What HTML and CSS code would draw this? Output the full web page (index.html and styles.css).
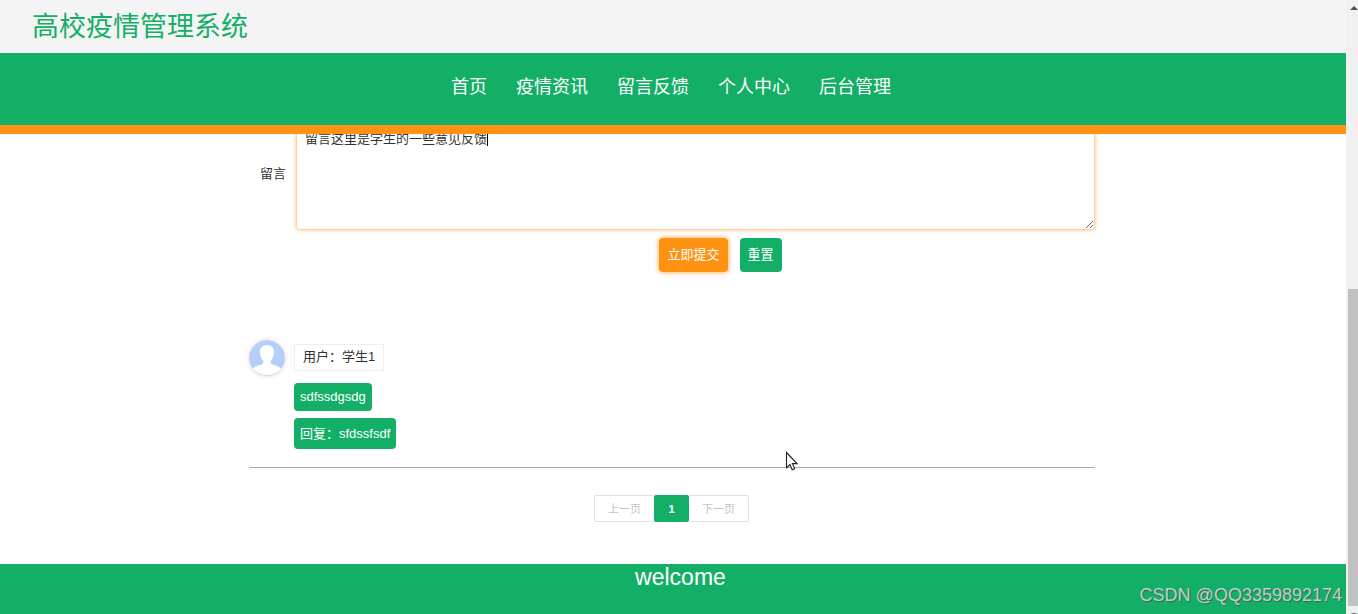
FILE: index.html
```html
<!DOCTYPE html>
<html lang="zh-CN">
<head>
<meta charset="utf-8">
<title>高校疫情管理系统</title>
<link rel="stylesheet" href="styles.css">
</head>
<body>
<div class="page">
  <header class="header">
    <h1 class="title">高校疫情管理系统</h1>
    <nav class="nav">
      <a href="#">首页</a>
      <a href="#">疫情资讯</a>
      <a href="#">留言反馈</a>
      <a href="#">个人中心</a>
      <a href="#">后台管理</a>
    </nav>
  </header>
  <main class="content">
    <form class="form">
      <div class="field">
        <label for="message">留言</label>
        <div class="box">
          <textarea id="message">留言这里是学生的一些意见反馈</textarea>
          <span class="caret"></span>
        </div>
      </div>
      <div class="actions">
        <button type="button" class="btn submit">立即提交</button>
        <button type="reset" class="btn">重置</button>
      </div>
    </form>
    <article class="comment">
      <svg class="avatar" viewBox="0 0 36 36" aria-hidden="true">
        <circle cx="18" cy="18" r="18" fill="#b5cffb"/>
        <path d="M18 5c-4.800 0-7.300 3.300-7 8 .2 3.500 1.500 6 3.300 7.700v2.500c-1.600 1.800-6.600 2-10.500 5.200A18 18 0 0 0 32.200 28.400c-3.900-3.200-8.900-3.400-10.500-5.200v-2.500c1.800-1.700 3.100-4.200 3.300-7.700.3-4.700-2.200-8-7-8z" fill="#fff"/>
      </svg>
      <div class="thread">
        <span class="user">用户：学生1</span>
        <p class="bubble">sdfssdgsdg</p>
        <p class="bubble reply">回复：sfdssfsdf</p>
      </div>
    </article>
    <nav class="pager" aria-label="分页">
      <button type="button" disabled>上一页</button>
      <button type="button" class="current">1</button>
      <button type="button" disabled>下一页</button>
    </nav>
  </main>
  <footer class="footer">welcome</footer>
</div>
<div class="scrollbar" aria-hidden="true">
  <span class="arrow"></span>
  <span class="thumb"></span>
  <span class="arrow down"></span>
</div>
<span class="watermark">CSDN @QQ3359892174</span>
<svg class="cursor" viewBox="0 0 13 20" aria-hidden="true"><path d="M1.500 1.500v15.200l3.400-3.200 2.300 5.200 2.500-1.100-2.300-5h4.600z" fill="#fff" stroke="#222" stroke-width="1.100"/></svg>
</body>
</html>
```
FILE: styles.css
```css
* { box-sizing: border-box; }

body {
  margin: 0;
  min-height: 100vh;
  display: flex;
  overflow: hidden;
  position: relative;
  background: #fff;
  color: #333;
  font: 13px/20px "Liberation Sans", "Noto Sans CJK SC", sans-serif;
}

button, textarea { font: inherit; }

.page {
  flex: 1;
  display: flex;
  flex-direction: column;
}

.header {
  position: relative;
  z-index: 1;
  background: #f4f4f4;
}

.title {
  margin: 0;
  padding: 7px 32px 6px;
  color: #14af67;
  font-size: 27px;
  font-weight: 400;
  line-height: 40px;
}

.nav {
  display: flex;
  justify-content: center;
  gap: 29px;
  padding: 20px 4px 24px 0;
  background: #14af67;
  border-bottom: 9px solid #ff9212;
}

.nav a {
  color: #fff;
  font-size: 18px;
  line-height: 28px;
  text-decoration: none;
}

.content {
  flex: 1;
  width: 100%;
  max-width: 848px;
  margin: -10px auto 0;
  padding-right: 2px;
}

.field {
  display: flex;
  align-items: center;
  gap: 10px;
  padding-left: 11px;
}

.field label { padding-bottom: 6px; }

.box {
  flex: 1;
  position: relative;
  display: flex;
}

.box textarea {
  flex: 1;
  height: 106px;
  padding: 4px 8px;
  border: 1px solid #ffd0a3;
  border-radius: 4px;
  outline: 0;
  box-shadow: 0 0 4px #ffbe84;
  color: #333;
}

.caret {
  position: absolute;
  left: 191px;
  top: 8px;
  width: 1px;
  height: 14px;
  background: #000;
}

.actions {
  display: flex;
  justify-content: center;
  gap: 12px;
  padding: 8px 0 0 97px;
}

.btn {
  height: 34px;
  padding: 0 8px;
  border: 0;
  border-radius: 4px;
  background: #14af67;
  color: #fff;
}

.submit {
  background: #ff9212;
  box-shadow: 0 0 5px #ff9d2e;
}

.comment {
  display: flex;
  gap: 9px;
  margin-top: 68px;
  padding-bottom: 18px;
  border-bottom: 1px solid #aaa;
}

.avatar {
  width: 36px;
  height: 36px;
  border-radius: 50%;
  box-shadow: 0 0 4px #ffc4cf;
}

.thread {
  display: flex;
  flex-direction: column;
  align-items: flex-start;
  padding-top: 4px;
}

.user {
  padding: 2px 8px 3px;
  border: 1px solid #eee;
}

.bubble {
  margin: 12px 0 0;
  padding: 4px 6px;
  border-radius: 4px;
  background: #14af67;
  color: #fff;
}

.reply {
  margin-top: 7px;
  padding: 6px 6px 5px;
}

.pager {
  display: flex;
  justify-content: center;
  padding: 27px 1px 0 0;
}

.pager button {
  width: 60px;
  height: 27px;
  padding: 0;
  border: 1px solid #e2e2e2;
  border-radius: 2px;
  background: #fff;
  color: #c4c4c4;
  font-size: 11px;
}

.pager button:first-child { border-right: 0; }
.pager button:last-child { border-left: 0; }

.pager .current {
  width: 35px;
  border: 0;
  background: #14af67;
  color: #fff;
  font-weight: bold;
}

.footer {
  height: 50px;
  padding-left: 15px;
  background: #14af67;
  color: #fff;
  font-size: 23px;
  line-height: 27px;
  text-align: center;
}

.scrollbar {
  width: 12px;
  padding: 6px 0 0 2px;
  display: flex;
  flex-direction: column;
  align-items: flex-end;
  background: #f1f1f1;
}

.arrow {
  border: 4px solid transparent;
  border-top: 0;
  border-bottom-color: #505050;
}

.arrow.down {
  margin-top: 7px;
  border-top: 1px solid #505050;
  border-bottom: 0;
}

.thumb {
  flex: 1;
  width: 10px;
  margin-top: 279px;
  background: #c1c1c1;
}

.watermark {
  position: absolute;
  right: 16px;
  bottom: 7px;
  color: #c3cec8;
  font-size: 18px;
  line-height: 24px;
  text-shadow: 1px 1px 1px #35684e;
  z-index: 2;
}

.cursor {
  position: absolute;
  left: 785px;
  top: 451px;
  width: 13px;
  height: 20px;
}
```
